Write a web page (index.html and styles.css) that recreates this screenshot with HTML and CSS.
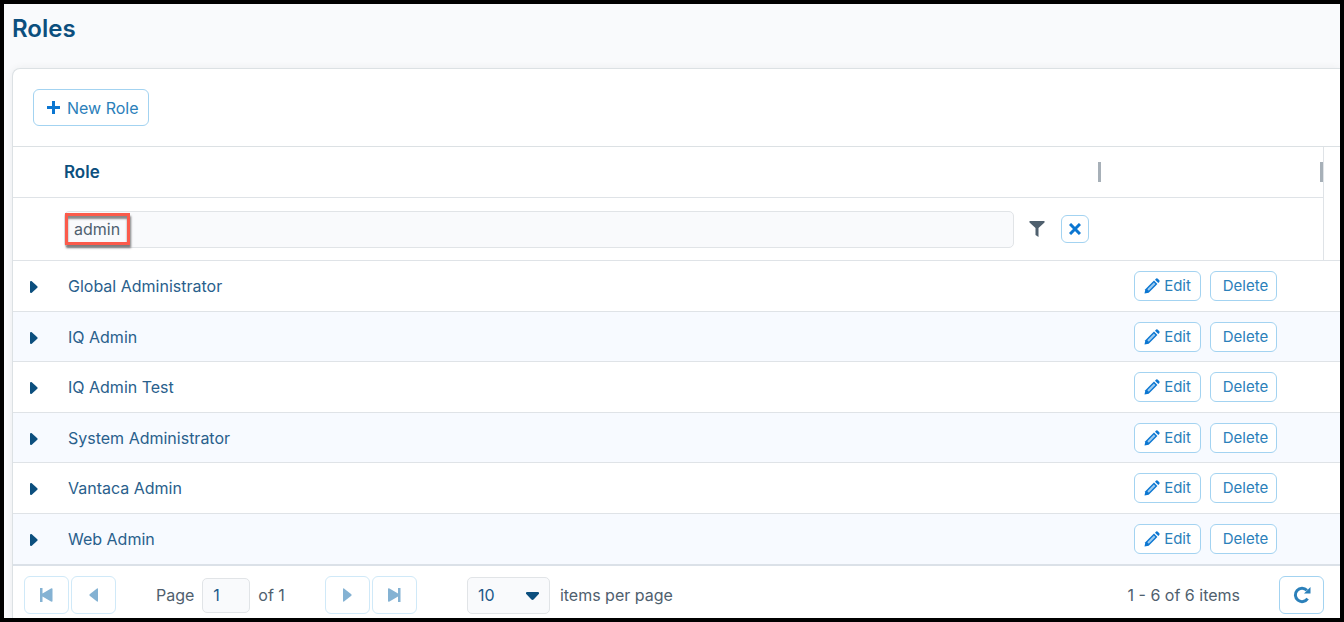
FILE: index.html
```html
<!DOCTYPE html>
<html lang="en">
<head>
<meta charset="UTF-8">
<meta name="viewport" content="width=device-width, initial-scale=1.0">
<title>Roles</title>
<link rel="stylesheet" href="styles.css">
</head>
<body>
<svg class="sprite" aria-hidden="true">
  <symbol id="caret" viewBox="0 0 8 12"><path d="M0 1Q0 0 1 0H1.500L7.300 5.200Q8 6 7.300 6.800L1.500 12H1Q0 12 0 11Z"/></symbol>
  <symbol id="pencil" viewBox="0 0 16 16">
    <path d="M.5 15.500L1.300 11.300L10 2.600L13.400 6L4.700 14.700Z"/>
    <path d="M11 1.700L12.200.6Q13 0 13.800.7L15.300 2.200Q16 3 15.300 3.900L14.300 5Z"/>
    <path class="pencil-light" d="M3.300 11.200L9.900 4.600L11.400 6.100L4.800 12.700Z"/>
  </symbol>
</svg>

<h1 class="title">Roles</h1>

<main class="card">
  <div class="toolbar">
    <button class="btn btn-new">
      <svg width="13" height="13" viewBox="0 0 13 13" aria-hidden="true"><path d="M6.500 0V13M0 6.500H13"/></svg>
      New Role
    </button>
  </div>

  <table class="grid">
    <colgroup>
      <col class="col-expand">
      <col>
      <col class="col-actions">
      <col class="col-gutter">
    </colgroup>
    <thead>
      <tr class="head-row">
        <th></th>
        <th><div class="head-cell">Role <span class="handle"></span></div></th>
        <th><div class="head-cell head-end"><span class="handle"></span></div></th>
        <th class="gutter" rowspan="2"></th>
      </tr>
      <tr class="filter-row">
        <td></td>
        <td>
          <div class="filter">
            <input class="filter-input" type="text" value="admin" aria-label="Filter by role">
            <span class="highlight"></span>
            <button class="filter-btn" aria-label="Filter">
              <svg width="16" height="16" viewBox="0 0 16 16" aria-hidden="true"><path d="M.5 0H15.500V1.500L9.500 7V16L6.500 14V7L.5 1.500Z"/></svg>
            </button>
            <button class="btn btn-clear" aria-label="Clear">
              <svg width="12" height="12" viewBox="0 0 12 12" aria-hidden="true"><path d="M1 1L11 11M11 1L1 11"/></svg>
            </button>
          </div>
        </td>
        <td></td>
      </tr>
    </thead>
    <tbody>
      <tr>
        <td><button class="expand" aria-label="Expand"><svg width="8" height="12"><use href="#caret"/></svg></button></td>
        <td class="name">Global Administrator</td>
        <td colspan="2"><div class="actions">
          <button class="btn btn-row"><svg width="16" height="16"><use href="#pencil"/></svg>Edit</button>
          <button class="btn btn-row btn-delete">Delete</button>
        </div></td>
      </tr>
      <tr>
        <td><button class="expand" aria-label="Expand"><svg width="8" height="12"><use href="#caret"/></svg></button></td>
        <td class="name">IQ Admin</td>
        <td colspan="2"><div class="actions">
          <button class="btn btn-row"><svg width="16" height="16"><use href="#pencil"/></svg>Edit</button>
          <button class="btn btn-row btn-delete">Delete</button>
        </div></td>
      </tr>
      <tr>
        <td><button class="expand" aria-label="Expand"><svg width="8" height="12"><use href="#caret"/></svg></button></td>
        <td class="name">IQ Admin Test</td>
        <td colspan="2"><div class="actions">
          <button class="btn btn-row"><svg width="16" height="16"><use href="#pencil"/></svg>Edit</button>
          <button class="btn btn-row btn-delete">Delete</button>
        </div></td>
      </tr>
      <tr>
        <td><button class="expand" aria-label="Expand"><svg width="8" height="12"><use href="#caret"/></svg></button></td>
        <td class="name">System Administrator</td>
        <td colspan="2"><div class="actions">
          <button class="btn btn-row"><svg width="16" height="16"><use href="#pencil"/></svg>Edit</button>
          <button class="btn btn-row btn-delete">Delete</button>
        </div></td>
      </tr>
      <tr>
        <td><button class="expand" aria-label="Expand"><svg width="8" height="12"><use href="#caret"/></svg></button></td>
        <td class="name">Vantaca Admin</td>
        <td colspan="2"><div class="actions">
          <button class="btn btn-row"><svg width="16" height="16"><use href="#pencil"/></svg>Edit</button>
          <button class="btn btn-row btn-delete">Delete</button>
        </div></td>
      </tr>
      <tr>
        <td><button class="expand" aria-label="Expand"><svg width="8" height="12"><use href="#caret"/></svg></button></td>
        <td class="name">Web Admin</td>
        <td colspan="2"><div class="actions">
          <button class="btn btn-row"><svg width="16" height="16"><use href="#pencil"/></svg>Edit</button>
          <button class="btn btn-row btn-delete">Delete</button>
        </div></td>
      </tr>
    </tbody>
  </table>

  <div class="pager">
    <div class="pager-nav">
      <button class="btn btn-page" disabled aria-label="First page">
        <svg width="13" height="14" viewBox="0 0 13 14"><path d="M0 0H2.500V5.500L11 .5Q12.500 0 12.500 1V13Q12.500 14 11 13.500L2.500 8.500V14H0Z"/></svg>
      </button>
      <button class="btn btn-page" disabled aria-label="Previous page">
        <svg width="9" height="14" viewBox="0 0 9 14"><path d="M9 1Q9 0 8 .5L.7 6.300Q0 7 .7 7.700L8 13.500Q9 14 9 13Z"/></svg>
      </button>
    </div>
    <label class="pager-page">Page <input class="page-input" type="text" value="1"> of 1</label>
    <div class="pager-nav">
      <button class="btn btn-page" disabled aria-label="Next page">
        <svg width="9" height="14" viewBox="0 0 9 14"><path d="M0 1Q0 0 1 .5L8.300 6.300Q9 7 8.300 7.700L1 13.500Q0 14 0 13Z"/></svg>
      </button>
      <button class="btn btn-page" disabled aria-label="Last page">
        <svg width="13" height="14" viewBox="0 0 13 14"><path d="M12.500 0H10V5.500L1.500 .5Q0 0 0 1V13Q0 14 1.500 13.500L10 8.500V14H12.500Z"/></svg>
      </button>
    </div>
    <label class="pager-size">
      <span class="select-wrap">
        <select class="size-select"><option>10</option><option>20</option><option>50</option></select>
        <svg class="select-arrow" width="13" height="8" viewBox="0 0 13 8"><path d="M1 0H12Q13 0 13 1V1.800L7.800 7.300Q6.500 8.500 5.200 7.300L0 1.800V1Q0 0 1 0Z"/></svg>
      </span>
      items per page
    </label>
    <span class="pager-info">1 - 6 of 6 items</span>
    <button class="btn btn-page" aria-label="Refresh">
      <svg width="18" height="18" viewBox="0 0 18 18"><path class="arc" d="M14.600 12.700A6.700 6.700 0 1 1 13.900 4.300"/><path d="M17.500 1V7.500H11Z"/></svg>
    </button>
  </div>
</main>
</body>
</html>
```
FILE: styles.css
```css
* {
  box-sizing: border-box;
}
body {
  margin: 0;
  min-height: 100vh;
  display: flex;
  flex-direction: column;
  padding-left: 8px;
  border: 4px solid #000;
  background: #f9fafc;
  color: #4f606e;
  font: 16px/24px Inter, sans-serif;
  overflow: hidden;
}
button, input, select {
  font: inherit;
  color: inherit;
  margin: 0;
}
svg {
  display: block;
  flex: none;
  fill: currentColor;
}
.sprite {
  position: absolute;
  width: 0;
  height: 0;
}
.title {
  margin: 0;
  padding: 9px 0 23px;
  font-size: 24px;
  line-height: 32px;
  font-weight: 600;
  color: #0c4f7e;
}
.card {
  flex: 1;
  background: #fff;
  border: 1px solid #dce1e4;
  border-width: 1px 0 0 1px;
  border-radius: 8px 0 0 0;
  box-shadow: 0 0 8px rgba(0, 0, 0, 0.06);
}
.toolbar {
  padding: 20px;
}

/* buttons */
.btn {
  display: inline-flex;
  align-items: center;
  justify-content: center;
  padding: 0;
  background: #fff;
  border: 1px solid #a3d3f1;
  border-radius: 6px;
  color: #2b80ba;
}
.btn-new {
  height: 37px;
  padding: 0 9px 0 13px;
  gap: 7px;
}
.btn-new svg,
.btn-clear svg {
  fill: none;
  stroke: #0b76d1;
  stroke-width: 3;
}
.btn-clear {
  width: 28px;
  height: 28px;
}
.btn-row {
  width: 67px;
  height: 30px;
  gap: 4px;
  font-size: 15px;
}
.btn-row svg {
  color: #0b76d1;
}
.btn-delete {
  padding-left: 4px;
}
.pencil-light {
  fill: #9ccbf0;
}
.btn-page {
  width: 45px;
  height: 38px;
}
.btn-page:disabled {
  border-color: #d0e9f8;
  color: #84b2d3;
}
.arc {
  fill: none;
  stroke: currentColor;
  stroke-width: 3;
}

/* grid */
.grid {
  width: 100%;
  table-layout: fixed;
  border-collapse: separate;
  border-spacing: 0;
  border-top: 1px solid #dce1e4;
}
.grid th,
.grid td {
  padding: 0;
  border-bottom: 1px solid #dfe3e7;
  text-align: left;
}
.col-expand {
  width: 51px;
}
.col-actions {
  width: 222px;
}
.col-gutter {
  width: 17px;
}
.head-row {
  height: 51px;
}
.head-cell {
  display: flex;
  align-items: center;
  justify-content: space-between;
  font-size: 17px;
  font-weight: 600;
  color: #0c4f7e;
}
.head-end {
  justify-content: flex-end;
}
.handle {
  width: 3px;
  height: 20px;
  background: #a7b0b8;
}
.grid .gutter {
  border-left: 1px solid #dfe3e7;
}
.filter-row {
  height: 63px;
}
.filter {
  position: relative;
  display: flex;
  align-items: center;
  padding-right: 12px;
}
.filter-input {
  flex: 1;
  height: 37px;
  padding: 0 9px;
  background: #f9fafc;
  border: 1px solid #e1e4e7;
  border-radius: 5px;
}
.highlight {
  position: absolute;
  left: 1px;
  top: 2px;
  width: 65px;
  height: 32px;
  border: 3px solid #fb5b4b;
  box-shadow: 1px 3px 2px rgba(0, 0, 0, 0.5), inset 0 3px 2px rgba(0, 0, 0, 0.45);
  pointer-events: none;
}
.filter-btn {
  padding: 0;
  margin: 0 16px 0 15px;
  background: none;
  border: 0;
}
tbody tr {
  height: 51px;
}
tbody tr:nth-child(even) {
  height: 50px;
  background: #f7faff;
}
.grid tbody tr:last-child td {
  border-bottom: 0;
}
.expand {
  display: block;
  margin-left: 17px;
  padding: 2px 0 0;
  background: none;
  border: 0;
  color: #0c4f7e;
}
.grid .name {
  padding-left: 4px;
  color: #29608c;
}
.actions {
  display: flex;
  gap: 9px;
  padding-left: 33px;
}

/* pager */
.pager {
  display: flex;
  align-items: center;
  padding: 10px 16px 4px 11px;
  border-top: 2px solid #dbe1e8;
}
.pager-nav {
  display: flex;
  gap: 2px;
}
.pager-page {
  display: flex;
  align-items: center;
  gap: 8px;
  margin: 0 40px;
}
.page-input {
  width: 48px;
  height: 35px;
  padding: 0 10px;
  background: #f9fafc;
  border: 1px solid #e1e4e7;
  border-radius: 5px;
  color: #20598a;
}
.pager-size {
  display: flex;
  align-items: center;
  gap: 10px;
  margin-left: 50px;
}
.select-wrap {
  position: relative;
}
.size-select {
  display: block;
  appearance: none;
  width: 83px;
  height: 37px;
  padding: 0 10px;
  background: #f9fafc;
  border: 1px solid #e1e4e7;
  border-radius: 5px;
  color: #20598a;
}
.select-arrow {
  position: absolute;
  right: 11px;
  top: 15px;
  color: #0c4f7e;
  pointer-events: none;
}
.pager-info {
  margin-left: auto;
  margin-right: 39px;
}
```
